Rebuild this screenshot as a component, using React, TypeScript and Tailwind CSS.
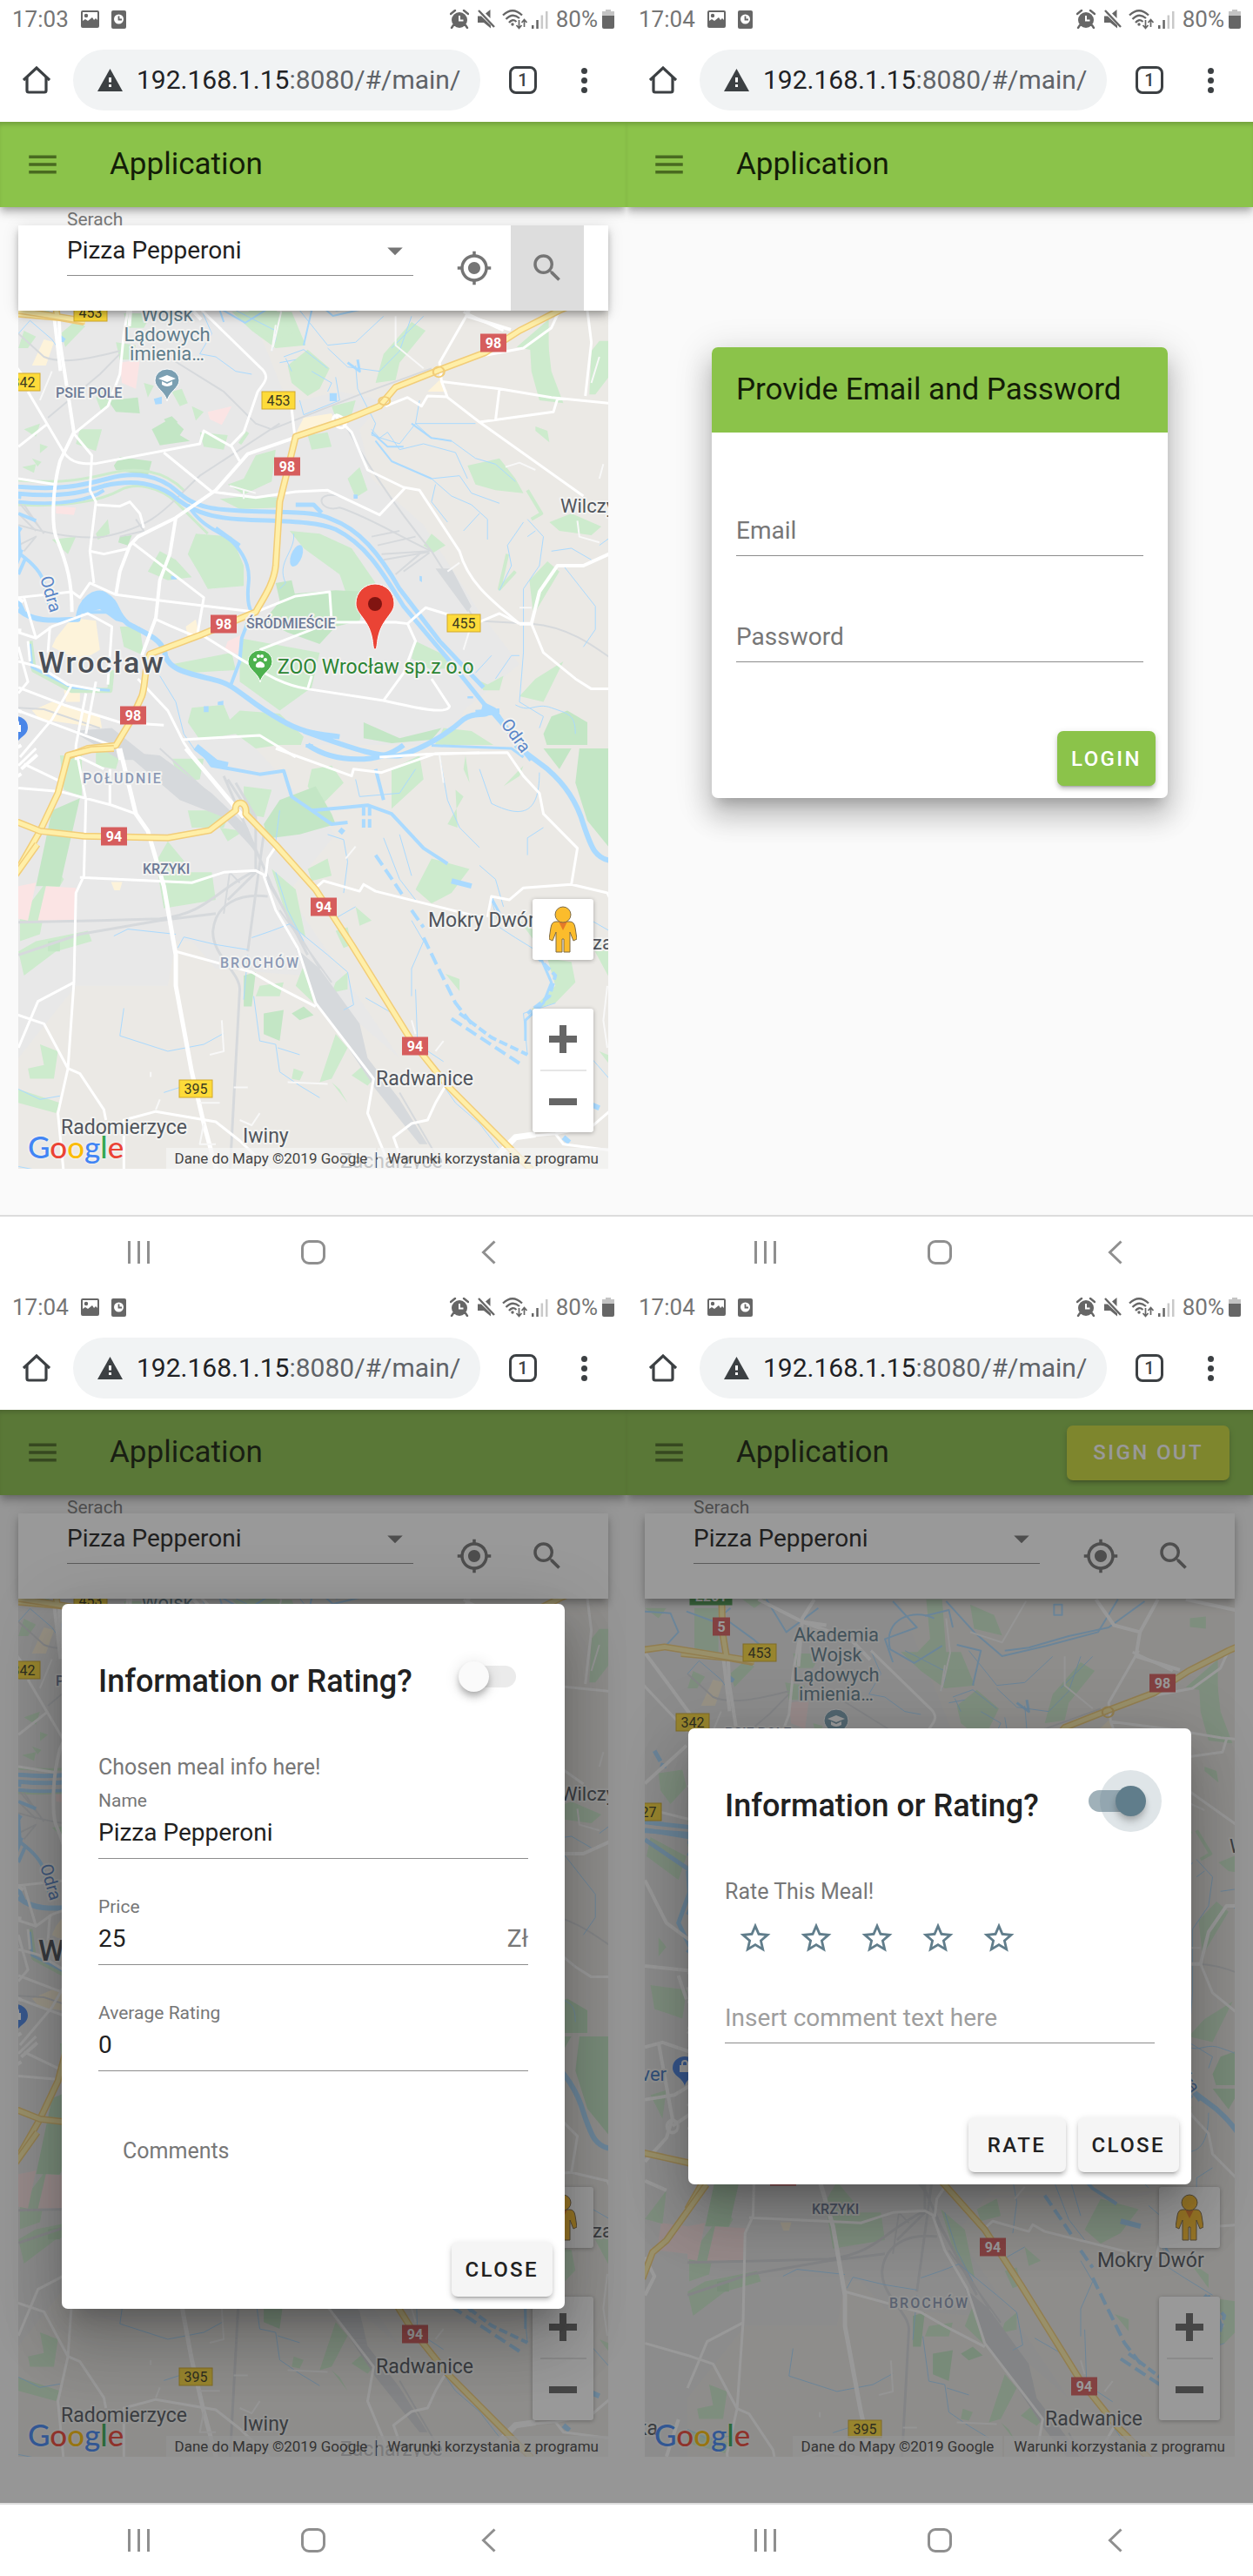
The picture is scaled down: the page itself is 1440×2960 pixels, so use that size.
import React from "react";
import { MdArrowDropDown, MdGpsFixed, MdMenu, MdSearch, MdStarBorder } from "react-icons/md";

/* ---------- Status bar ---------- */

function StatusBar({ time }: { time: string }) {
  return (
    <div className="flex h-11 items-center justify-between bg-white pl-[14px] pr-[14px] text-[26px] leading-none text-[#757575]">
      <div className="flex items-center gap-[14px]">
        <span>{time}</span>
        <svg className="h-[22px] w-[21px]" viewBox="0 0 21 22" fill="#666">
          <path
            fillRule="evenodd"
            d="M2 1h17a2 2 0 0 1 2 2v16a2 2 0 0 1-2 2H2a2 2 0 0 1-2-2V3a2 2 0 0 1 2-2Zm0 2v10l3-2 3 2 5-4 2 3 2-2 2 2V3Z"
          />
          <circle cx="6" cy="7" r="2.2" />
        </svg>
        <svg className="h-[22px] w-[17px]" viewBox="0 0 17 22" fill="none">
          <rect y="1" width="17" height="21" rx="2" fill="#666" />
          <circle cx="8.500" cy="11" r="5.500" fill="#fff" />
          <path d="M8.500 7.500V11.500H12" stroke="#666" strokeWidth="1.800" />
        </svg>
      </div>
      <div className="flex items-center">
        <svg className="mr-[10px] h-[22px] w-[22px]" viewBox="0 0 22 22" fill="none">
          <path d="M1 5 6 1M21 5 16 1M4 18 2 21M18 18l2 3" stroke="#666" strokeWidth="2.400" strokeLinecap="round" />
          <circle cx="11" cy="12" r="9" fill="#666" />
          <path d="M11 7v5.500h4.500" stroke="#fff" strokeWidth="2" />
        </svg>
        <svg className="mr-[8px] h-[22px] w-[20px]" viewBox="0 0 20 22" fill="#666">
          <path d="M0 7.500h4L15 18v3.500L7 15H0Z" />
          <path d="M9 4.500 14.500 0v10Z" />
          <path d="m1 1 18 19" stroke="#666" strokeWidth="2.400" />
        </svg>
        <svg className="mr-[5px] h-[24px] w-[29px]" viewBox="0 0 29 24" fill="none" stroke="#666" strokeWidth="2.300">
          <path d="M1 7.500Q12-3 23 7.500" />
          <path d="M4.500 12Q12 4 20 11" />
          <path d="M8 16Q12 11 16.500 15" />
          <circle cx="12" cy="18" r="1.700" fill="#666" stroke="none" />
          <path d="M19.500 13v9m-3-3 3 3.500 3-3.500M25.500 21v-8m-3 3 3-3.500 3 3.500" strokeWidth="1.700" />
        </svg>
        <svg className="mr-[9px] h-[22px] w-[19px]" viewBox="0 0 19 22">
          <path d="M0 18h2.500v4H0ZM5.300 12h2.500v10H5.300Z" fill="#666" />
          <path d="M10.600 6.500h2.500V22h-2.500ZM16 2h2.500v20H16Z" fill="#c9c9c9" />
        </svg>
        <span>80%</span>
        <svg className="ml-[5px] h-[22px] w-[14px]" viewBox="0 0 14 22">
          <path d="M4 0h6v2h4v5H0V2h4Z" fill="#c4c4c4" />
          <path d="M0 7h14v13a2 2 0 0 1-2 2H2a2 2 0 0 1-2-2Z" fill="#666" />
        </svg>
      </div>
    </div>
  );
}

/* ---------- Browser tool bar ---------- */

function BrowserBar() {
  return (
    <div className="flex h-24 items-center bg-white pl-[26px] pr-[41px]">
      <button type="button" aria-label="Home page" className="mr-[26px]">
        <svg className="block h-8 w-8" viewBox="0 0 32 32" fill="none" stroke="#3c4043" strokeWidth="3.200">
          <path d="M1 16 16 2 31 16" />
          <path d="M5 13v15a2 2 0 0 0 2 2h18a2 2 0 0 0 2-2V13" />
        </svg>
      </button>
      <div className="flex h-[70px] min-w-0 flex-1 items-center rounded-full bg-[#f1f3f4] pl-7 pr-[17px]">
        <svg className="mr-4 h-[26px] w-[29px] shrink-0" viewBox="0 0 29 26">
          <path d="M14.500 0 29 26H0Z" fill="#3c4043" />
          <path d="M13 10h3v5.500h-3ZM13 18h3v3h-3Z" fill="#fff" />
        </svg>
        <a href="#main" className="block min-w-0 flex-1 overflow-hidden whitespace-nowrap text-[30px] leading-[42px] text-[#5f6368]">
          <span className="text-[#202124]">192.168.1.15</span>:8080/#/main/
        </a>
      </div>
      <button
        type="button"
        aria-label="Open tabs"
        className="ml-[33px] flex h-8 w-8 items-center justify-center rounded-[8px] border-[3px] border-[#3c4043] text-[20px] font-medium leading-none text-[#3c4043]"
      >
        1
      </button>
      <button type="button" aria-label="More options" className="ml-[46px] flex w-4 flex-col items-center gap-1">
        <span className="h-[7px] w-[7px] rounded-full bg-[#3c4043]" />
        <span className="h-[7px] w-[7px] rounded-full bg-[#3c4043]" />
        <span className="h-[7px] w-[7px] rounded-full bg-[#3c4043]" />
      </button>
    </div>
  );
}

/* ---------- Application bar ---------- */

function AppBar({ signOut = false }: { signOut?: boolean }) {
  return (
    <header className="relative z-20 flex h-[98px] items-center bg-[#8bc34a] pl-7 pr-[27px] shadow-[inset_0_5px_5px_-2px_rgba(0,0,0,0.18),0_4px_7px_-2px_rgba(0,0,0,0.2),0_7px_9px_0_rgba(0,0,0,0.14),0_2px_18px_0_rgba(0,0,0,0.12)]">
      <button type="button" aria-label="Menu">
        <MdMenu className="block h-[42px] w-[42px] text-[#496a20]" />
      </button>
      <h1 className="ml-[56px] flex-1 text-[35px] leading-[42px] text-[#131d08]">Application</h1>
      {signOut && (
        <button
          type="button"
          className="h-[63px] rounded-[7px] bg-[#cddc39] px-[30px] text-[24px] font-medium tracking-widest text-white shadow-[0_5px_2px_-4px_rgba(0,0,0,0.2),0_4px_4px_0_rgba(0,0,0,0.14),0_2px_9px_0_rgba(0,0,0,0.12)]"
        >
          SIGN OUT
        </button>
      )}
    </header>
  );
}

function SearchCard({ id, active = false }: { id: string; active?: boolean }) {
  return (
    <form className="relative z-10 mx-[21px] mt-[21px] flex h-[98px] bg-white pl-[56px] pr-7 shadow-[0_4px_7px_-2px_rgba(0,0,0,0.2),0_7px_9px_0_rgba(0,0,0,0.14),0_2px_18px_0_rgba(0,0,0,0.12)]">
      <div className="relative mr-7 flex-1">
        <label htmlFor={id} className="absolute -top-[19px] left-0 text-[21px] leading-[24px] text-[#777]">
          Serach
        </label>
        <select
          id={id}
          className="h-[58px] w-full appearance-none border-b border-[#8c8c8c] bg-transparent text-[28px] text-[#212121] outline-none"
        >
          <option>Pizza Pepperoni</option>
        </select>
        <MdArrowDropDown className="pointer-events-none absolute right-0 top-2 h-[42px] w-[42px] text-[#757575]" />
      </div>
      <button type="button" aria-label="My location" className="flex w-[84px] items-center justify-center text-[#757575]">
        <MdGpsFixed className="h-[42px] w-[42px]" />
      </button>
      <button
        type="button"
        aria-label="Search"
        className={`flex w-[84px] items-center justify-center text-[#757575] ${active ? "bg-[#dddddd]" : ""}`}
      >
        <MdSearch className="h-[42px] w-[42px]" />
      </button>
    </form>
  );
}

/* ---------- Map ---------- */

type SheetProps = { transform: string; children: React.ReactNode };

const NORTH = "translate(0 350) scale(0.4592 0.3333)";
const SOUTH = "translate(0 860) scale(0.4592 0.3954)";
const NORTH_WEST = "translate(-49 -60) scale(0.4592 0.3954)";
const SOUTH_WEST = "translate(-49 560) scale(0.4592 0.5485)";

function Sheet({ transform, children }: SheetProps) {
  return <g transform={transform}>{children}</g>;
}

function Line({ d, color, width, dash }: { d: string; color: string; width: number; dash?: string }) {
  return (
    <path
      d={d}
      fill="none"
      stroke={color}
      strokeWidth={width}
      strokeDasharray={dash}
      strokeLinejoin="round"
      vectorEffect="non-scaling-stroke"
    />
  );
}

const GREEN = "#cdebcd";
const DARK_GREEN = "#c3e6c5";
const WATER = "#aadaff";
const RAIL = "#d6d9dc";
const PINK = "#fbe4e4";
const CREAM = "#fdf3da";

const MAIN_NORTH =
  "M1500 -40L1400 20L1300 90L1215 165L1100 225L990 285L950 350L870 395L740 455L725 540L700 680L690 900C685 970 650 1030 640 1060L500 1140L375 1205C360 1260 365 1310 355 1350L325 1440L290 1520L220 1530L165 1560";
const MAIN_SOUTH = "M285 0L230 3L170 20L145 130L100 240L46 350";
const MAIN_94 =
  "M-70 185L46 215L100 240L210 255L420 260L525 238L590 180C585 150 620 150 615 190L690 280L790 410L880 570L1030 850L1120 980L1330 1225";
const MAIN_NW = "M40 1052L95 1043L240 1070L320 1085M238 890L240 1000L250 1070";
const MAIN_SW = "M200 748L100 865L65 890L40 945";

function Highway({ d }: { d: string }) {
  return (
    <>
      <Line d={d} color="#f2cd78" width={8} />
      <Line d={d} color="#ffefa8" width={5} />
    </>
  );
}

function Terrain() {
  return (
    <>
      <rect x="-40" y="280" width="760" height="1080" fill="#e8e8e8" />
      <Sheet transform={NORTH}>
        <path
          fill="#ebe9e5"
          d="M560 -200H1600V1590H1120L1160 1400L1300 1240L1200 1060L1060 760L930 600L900 430L960 330L850 300L720 340L680 200Z"
        />
        <path
          fill={GREEN}
          d="M580 25H730L765 140L690 150L630 90ZM720 210L770 155L825 220L800 290L770 315L730 270ZM960 170L1030 60L1065 90L1000 200L990 260L940 270ZM1325 110H1370L1380 230L1410 340L1350 330L1330 230ZM1475 310L1480 160L1500 125H1540V220L1490 310ZM610 600L640 520L690 500L680 610L610 655L570 620ZM550 670L620 660L700 665V700L600 705ZM470 860L490 790L580 800L610 900V970L520 980L500 930ZM725 780L800 790L880 840L940 960L870 1010L850 930L760 840ZM600 1150L720 1180L800 1200L780 1320L700 1400L600 1300ZM190 480L200 430L255 430L240 505ZM770 450L820 440L830 490L780 500ZM130 810L190 800L170 860ZM1325 950L1370 885L1400 920L1335 1070ZM1340 1290L1410 1230L1360 1370L1300 1350ZM1170 555L1250 530L1290 600L1310 650L1240 640L1190 620ZM1060 830L1080 790L1115 830L1085 855ZM870 600L900 560L920 640L890 665ZM1375 750L1430 720L1505 765L1480 795L1400 780ZM480 1390L560 1380L590 1480L500 1500L470 1440ZM600 1400L700 1410L760 1490L740 1570L640 1530L560 1450ZM400 850L440 880L480 940L420 950L370 920ZM1040 1160L1100 1200L1140 1250L1080 1260L1030 1220ZM430 300L455 290L470 340L450 350ZM480 350L510 370L490 400ZM500 440L570 450L560 500L510 490ZM360 270L385 280L370 320ZM60 430l40-20l-10 45ZM55 560l35-10l-5 30ZM100 480l20 10l-20 22ZM80 530l24 12l-10 16ZM60 90L90 110L70 150L46 150ZM830 350L890 330L880 380L840 390ZM240 320l20-30l14 50l-20 30ZM290 130l50 10l-10 50h-30ZM310 30h70l-20 50h-40ZM240 790L270 740L275 790L245 810ZM1340 420l30 15l5 40l-35-40ZM1190 1290l30 20l40-30l-10 50h-40ZM1110 1460L1180 1470L1260 1540L1200 1560L1080 1540ZM430 1240L580 1200L590 1260L470 1270ZM300 1110L350 1110L360 1210L310 1180Z"
        />
        <path
          fill={DARK_GREEN}
          d="M690 1040L710 1000L840 985L920 990L900 1090L840 1110L800 1170L720 1130L660 1090ZM1380 1420L1420 1400L1470 1440V1570H1380L1360 1480ZM910 1440L1000 1495L1105 1460L1080 1500L980 1512L910 1495ZM270 330L345 320L350 375L290 370ZM380 430L430 390L460 430L450 450L475 470L400 485ZM285 555L300 525L380 540L370 590L290 570ZM410 395L430 385L445 405L425 420ZM690 960L730 950L740 1010L700 1020ZM300 800L330 795L320 830L296 820Z"
        />
        <path
          fill={PINK}
          d="M300 200L350 190L345 240L340 290L305 270ZM520 370L580 350L555 415L525 395ZM140 695L190 700L185 725L140 720ZM570 1160L602 1140L595 1205L562 1190Z"
        />
        <path
          fill={CREAM}
          d="M80 210L110 120L135 130L115 210ZM760 390L830 375L840 410L740 445ZM1070 300L1100 260L1120 300ZM140 1150L180 1080L240 1090L250 1190L200 1230L130 1180ZM80 1400L130 1370L250 1420L255 1460L100 1430ZM160 1330L200 1325L200 1370L165 1370ZM465 1110L490 1085L500 1150L470 1150Z"
        />
        <Line color={GREEN} width={6} d="M75 1160L85 1260L180 1330L275 1330L280 1260" />
        <Line color={GREEN} width={3} d="M46 605C160 620 220 600 280 580S410 570 460 640M46 690C180 700 260 670 300 640S400 630 440 680L520 790" />
        <Line color={GREEN} width={4} d="M1320 640L1355 720L1330 740M620 440L600 480M1270 860L1250 980L1290 920" />
      </Sheet>
      <Sheet transform={SOUTH}>
        <path fill="#ebe9e5" d="M700 -10H1600V1260H46V900L190 690H420L440 560L480 560L540 640L760 660L1000 900L720 420L840 250L640 0Z" />
        <path
          fill={GREEN}
          d="M470 180L530 180L570 200L560 230L480 230ZM150 20H205V140L160 120ZM50 490L140 350L160 380L110 480L100 540L50 560ZM390 330L420 270L470 340L460 360H530L540 440L410 465ZM1040 410L1080 320L1175 350L1130 420L1080 450ZM1480 570H1540V700ZM780 60L830 50L860 100L800 170L770 110ZM980 60L1050 20L1060 90L980 175ZM680 350L740 410L765 550L720 500ZM770 350L820 320L830 370L780 385ZM890 460L930 500L900 515ZM840 530L870 520L880 570L860 580ZM650 690L710 680L700 720L640 720ZM820 900L840 830L870 870L830 960L800 970ZM730 960L735 930L760 940L750 965ZM830 970L850 990L870 1030ZM880 950L910 920L935 960L920 980ZM70 930L110 920L100 860L145 880L135 960L75 960ZM46 990L150 1030L140 1060L46 1030ZM1370 610L1430 620L1440 680L1390 740L1330 760L1390 690ZM1115 655L1150 670L1150 705ZM46 590L90 560L220 530L230 560L140 590L60 660ZM240 0L300 20L290 60L240 50ZM430 30L510 30L500 90L450 100ZM1140 120L1160 140L1120 220L1145 230ZM760 630L785 740L740 690ZM1500 880L1540 900V940ZM840 680L870 650V700L830 710ZM550 230L610 240L570 270ZM610 110L680 120L660 200L610 190ZM1260 110L1310 50L1300 80ZM1165 20L1175 100L1160 60ZM1300 500L1350 540L1350 580Z"
        />
        <path
          fill={DARK_GREEN}
          d="M660 220L700 150L790 110L830 190L840 220L750 250L670 262ZM130 180L200 145L150 400H90ZM1450 0H1540V310L1470 210L1440 100ZM1360 0H1430L1400 60ZM610 660L640 650L630 750H610ZM660 770L710 760L700 850L660 830ZM730 770L760 750L785 775L750 790ZM120 560L150 555V590L120 590Z"
        />
        <path fill={PINK} d="M46 400L90 390L70 500L46 495ZM115 400L190 405L185 500L95 500ZM-20 390L46 400V480L-30 470Z" />
        <path fill={CREAM} d="M278 388h28l-6 24h-14Z" />
        <path fill={RAIL} d="M310 10L400 20L530 130L620 230L640 300L560 200L450 150ZM740 580L800 640L900 800L920 900L1000 1020L1070 1150L1050 1150L940 990L860 850L790 740Z" />
      </Sheet>
      <Sheet transform={NORTH_WEST}>
        <path
          fill={GREEN}
          d="M46 930H100L80 960ZM170 930H230V1060H170ZM860 920L920 950L940 1010L870 990ZM750 905H790L800 1060L840 1120L790 1140L710 1080L760 1020ZM1410 960L1450 955V990L1410 985ZM80 1410L140 1400L150 1450L110 1500L85 1460ZM290 905H350L320 930ZM260 1120L300 1080L320 1100L270 1160ZM1430 1130L1480 1080V1180L1400 1160Z"
        />
      </Sheet>
      <Sheet transform={SOUTH_WEST}>
        <path
          fill={GREEN}
          d="M60 20L150 60L130 110L50 60ZM80 230L100 250L80 270ZM60 330L150 340L140 400L70 380ZM60 560L100 550L90 610ZM46 820L100 760L90 830Z"
        />
      </Sheet>
    </>
  );
}

function Rails() {
  return (
    <>
      <Sheet transform={NORTH}>
        <Line
          color={RAIL}
          width={2}
          d="M46 100L110 180C160 210 240 180 300 160M120 390L250 240L300 170M420 180L560 300L640 410L680 430L900 310L1080 220M46 760C120 790 200 810 260 800C400 760 420 690 500 590L700 410M870 430C900 500 960 650 1080 850L1190 1090L1330 1100C1420 1110 1480 1170 1540 1230M850 660C780 640 800 720 850 700C920 730 1000 800 1080 850M46 680L100 770M60 690L110 790M46 720L90 780M340 740L360 780L300 800"
        />
        <Line
          color={RAIL}
          width={2}
          d="M930 800L1000 780M945 830L1040 800M955 860L1075 850M960 880L1075 852M1010 920L1075 855M990 930L1050 860M46 830L90 800L60 850M46 1390L110 1395L250 1460"
        />
        <path fill={RAIL} d="M1090 910L1130 910L1180 1040L1170 1060ZM180 1470L280 1460L380 1570H300Z" />
      </Sheet>
      <Sheet transform={SOUTH}>
        <Line
          color={RAIL}
          width={3}
          d="M46 505L250 500L400 495C520 480 540 410 640 355M46 600L200 540L400 500L540 480M575 1240L600 700C600 650 530 600 533 530C540 450 600 420 670 430M620 590L660 250L570 90M590 100L640 200L640 360L570 440M560 80L620 240L680 400L770 600"
        />
        <Line color={RAIL} width={2} d="M400 0L560 170L640 300M660 370L800 640M700 470L830 680M560 480L575 360L600 390M1000 1000L1090 1180" />
      </Sheet>
    </>
  );
}

function Water() {
  return (
    <>
      <Sheet transform={NORTH}>
        <Line
          color={WATER}
          width={5}
          d="M-70 610L46 628C150 640 200 625 270 600C340 572 400 592 440 640C490 700 520 712 690 715C770 716 800 722 830 740C900 775 950 860 1000 980L1100 1160L1210 1320"
        />
        <Line
          color={WATER}
          width={5}
          d="M-70 640L46 652C150 665 200 650 260 625C340 600 390 620 430 655C470 705 520 735 600 740C700 748 790 745 840 775C920 830 960 930 1010 1040L1120 1220L1225 1400"
        />
        <Line color={WATER} width={4} d="M46 680C160 695 230 670 260 640M470 690C510 780 560 780 590 830S625 920 622 960S620 1040 630 1060L605 1150L600 1230L578 1310" />
        <Line
          color={WATER}
          width={6}
          d="M46 1050C80 1095 130 1090 195 1085C200 1015 240 980 262 1000C300 1030 285 1060 320 1100C360 1130 400 1150 412 1195C415 1260 470 1270 540 1295C590 1310 620 1370 700 1430C760 1480 800 1480 850 1490M760 1470C900 1540 950 1560 1000 1555C1060 1530 1120 1480 1160 1430C1190 1400 1210 1425 1230 1400L1280 1480L1330 1570"
        />
        <Line color={WATER} width={4} d="M46 780L50 860C90 900 105 930 110 960L125 1050M46 930L65 870M205 1060H270M46 720L90 745M540 770L600 830" />
        <Line color={WATER} width={5} d="M740 690H785L805 718M500 1540L530 1570M1190 1405L1250 1400" />
        <path fill={WATER} d="M205 1020L235 990L265 1000L290 1050L320 1100L290 1090L250 1050L205 1065ZM1210 1370L1240 1390L1275 1460L1235 1415L1200 1420Z" />
        <ellipse cx="742" cy="866" rx="14" ry="38" fill={WATER} transform="rotate(14 742 866)" />
        <path
          fill={WATER}
          d="M825 305h18v28h-18ZM385 325l20-8v25l-16 2ZM510 1385h12v20h-12ZM545 1370l14-5v16h-14ZM428 935h14v12h-14ZM765 1515h18v12h-18ZM1050 935l6 2v20l-6-5ZM1170 1350h14v8h-14ZM148 115h12v14h-12ZM885 655h10v14h-10Z"
        />
        <Line
          color={WATER}
          width={1}
          d="M46 100L75 55L130 120L150 160M505 20L530 100L500 170L540 180L590 230L630 240M590 20L690 90V120L680 160M710 180L760 155L820 220M715 185L730 230M700 200L740 190M750 20L820 140L890 130L960 40M820 150L870 215L950 230L1000 160L1030 40M1060 40L980 150M890 210L895 290L940 410L930 450L1000 480L1040 410L1190 410M1050 330L1040 410L1080 460L1130 470L1190 530L1240 550L1290 610M940 470L980 540L1080 600L1130 660L1180 690L1220 740V810M930 430L950 460L970 440L1000 500L1060 480L1140 510L1170 600M1080 600L1150 590L1180 650L1250 685M1090 620L1080 680L1120 750M1200 720L1160 780M1340 780L1320 800M1310 750L1270 830L1280 900L1250 985M1320 740L1360 800L1350 900L1310 980V1200L1300 1370M1410 900L1450 970L1490 1040V1120L1460 1180M1380 850L1430 840L1480 880M735 790C740 850 690 890 715 960L700 980M400 1280L440 1370L460 1480L490 1540M1290 1380C1330 1410 1340 1370 1380 1390S1440 1410 1440 1480M1240 1290L1280 1210H1300M1300 1370L1360 1420L1350 1460M840 250L850 330L760 380M750 330L760 380M780 230L830 270L820 300M1540 790L1500 830M1190 1270L1230 1210"
        />
        <Line color={WATER} width={3} d="M1080 1520L1280 1530L1310 1560M75 1170L80 1250L180 1320L275 1330M870 200L900 230L895 190" />
        <Line color={WATER} width={2} d="M930 440L970 490L1010 490M940 470L980 540L1080 600M1030 410L1080 460L1130 470" />
        <Line color={WATER} width={2} d="M140 -90L210 -20L260 40M560 -150L620 -60L540 -20L560 60M640 -100L700 -120L710 -60M720 0L780 20L760 140M840 20L900 10L1000 -30L1100 -60L1190 -150" />
      </Sheet>
      <Sheet transform={SOUTH}>
        <Line color={WATER} width={6} d="M770 -10C840 45 950 45 1010 -10M1290 -10L1370 60C1430 120 1450 180 1460 220C1480 290 1490 325 1540 328" />
        <Line color={WATER} width={4} d="M500 0L530 50L580 60L650 75L710 65L730 140L780 180L860 172L920 165L980 190L1020 240L1060 290L1120 335M940 60L960 150M780 180L830 220L870 215" />
        <Line color={WATER} width={8} d="M490 -5L540 42L570 50" />
        <Line color={WATER} width={4} dash="14 6" d="M1060 550L1140 740L1180 800M1030 470L1060 520M940 310L1010 430M1130 785L1300 915" />
        <Line color={WATER} width={4} dash="10 4" d="M910 170V230M925 170V230M1150 770L1230 840L1320 890M1340 600L1390 660L1375 720L1320 770" />
        <Line color={WATER} width={6} d="M1130 385L1180 400M1410 1130L1425 1145M1480 1035L1500 1045M850 235L860 245" />
        <Line
          color={WATER}
          width={1}
          d="M285 545L320 525L440 540M445 580L460 548L540 570L620 585M620 600L610 730M635 720L650 850L690 860L700 940L750 980L800 1015M310 755L300 835L420 880L510 860L560 828M915 725L990 775M1100 20L1120 150L1150 230L1200 288M1350 70C1350 200 1300 200 1230 160L1200 60M820 250L860 265L870 330L860 420M630 550L680 530L725 510L820 600L870 650L885 745L860 760M845 490L890 460M1030 720L1030 640L1060 560L1030 500M1040 700L1045 860L1110 910M960 260L1000 380L1040 440M1000 250L1030 370M1230 440L1250 520L1290 550L1360 600M1390 740L1310 770L1320 890M1360 230L1320 260V310M1200 340L1240 380L1260 460M1110 980L1140 1030L1200 1090L1260 1180M695 870L750 890M46 990L100 1020L150 1010M410 1000L450 985M46 1215L90 1225M690 360L720 470L760 560M700 180L690 270M890 90L900 140L1000 130L1040 60M1480 500L1540 540M1480 900L1540 980"
        />
        <Line color={WATER} width={3} d="M1350 600L1380 680L1360 740L1315 790V850M1230 435L1260 500" />
      </Sheet>
      <Sheet transform={NORTH_WEST}>
        <Line
          color={WATER}
          width={2}
          d="M46 940L110 945L130 1000L90 1050M150 940L220 970L260 930M350 905L400 1000L480 930M660 1050C640 960 720 930 770 960M660 1050L720 1090L790 1040M800 910L870 1000L940 1070L1050 1040L1180 1000L1230 905M1070 920h20v30h-20Z"
        />
        <Line color={WATER} width={5} d="M70 1345L85 1375M85 1385L100 1390M255 1130L268 1142" />
      </Sheet>
      <Sheet transform={SOUTH_WEST}>
        <Line color={WATER} width={5} d="M46 5L160 20M46 25L160 90M160 130L130 200L165 260" />
      </Sheet>
    </>
  );
}

function Roads() {
  return (
    <>
      <Sheet transform={NORTH}>
        <Line
          color="#fff"
          width={4}
          d="M148 50L150 130L185 440L150 540C130 640 130 760 140 800C170 900 180 960 180 1060M735 460L620 515L540 640L440 735L345 800L325 830L300 920L290 1000M440 735L425 860L400 950L390 1080L355 1210M1300 1100L1330 1100L1350 990L1395 900L1460 900L1540 850"
        />
        <Line
          color="#fff"
          width={3}
          d="M325 -20L310 100L300 240L270 350L185 445M46 490L120 410M70 300L160 510C180 550 210 550 240 548L500 480L510 435L580 490L600 540M505 20L650 215C680 250 660 270 645 300L610 440L575 490M730 360L738 455M185 445L230 520L225 640L240 680L225 850L235 960M410 510L530 645L640 665L740 645L820 640L950 725L1015 630M840 385L880 440L920 570L1010 630L1050 640L1150 850C1170 950 1220 1010 1300 1100M1175 20L1100 200L1105 265L1250 290L1380 320L1540 342M1200 405L1385 370L1395 325M1105 265L1120 320L1200 405L1460 660M1250 290L1240 400M1160 25L1260 90M1470 20L1480 130L1465 315M1215 175L1310 150L1380 80L1400 20M965 350L1020 320L1055 350L1070 315L1120 318M840 380C820 400 850 440 862 420S850 380 840 380"
        />
        <Line
          color="#fff"
          width={3}
          d="M240 690L300 695L325 680L350 720L360 770M225 850L260 860L325 840M330 820L510 1010L495 1130L600 1220C650 1260 700 1310 770 1325L960 1365C1040 1390 1120 1415 1125 1385L1080 1290M46 1010L180 990L200 1010L225 960L290 1000L400 1020L640 1060L740 1005L825 990L830 1095L990 1095L1020 1100L1065 1045L1150 1080L1190 1100L1250 1065L1300 1100M650 1190L800 1110M770 1325L780 1280M1020 1100L1040 1160L1010 1270L960 1365M1330 1100L1360 1200L1440 1290L1480 1325H1540M345 1290L420 1400L460 1510L490 1570M455 1500L650 1485L740 1560M390 1085L430 1110L500 1150M950 1560L1070 1550L1200 1545M-70 560L46 600L140 620M-70 130L46 300"
        />
        <Line
          color="#fff"
          width={3}
          d="M46 1130L90 1150L130 1110L220 1065L280 1110L270 1310M70 1160L75 1230M46 1320L160 1380L300 1440L410 1450M46 1230L100 1250L170 1310L250 1330M180 1310L130 1430L50 1560M46 1400L280 1520M215 1340L190 1520V1570M240 1300L215 1480M46 1180L70 1300L46 1340M125 1110L120 1200M60 1010L90 1150M290 1510L300 1570"
        />
        <Line color="#f8f8f8" width={2} d="M575 625L640 650M610 640V670M990 40V140L1060 220M1265 560L1300 545L1340 570M1510 550L1500 600M1300 1045H1330M1150 890L1120 920M1180 1100L1160 1190M1445 745L1450 800L1500 820M1500 180L1480 270M130 230L100 330M690 70L680 160" />
      </Sheet>
      <Sheet transform={SOUTH}>
        <Line color="#fff" width={5} d="M300 0L340 190L370 240L410 400L440 600V690L480 940L510 1090L545 1240M465 0L610 200" />
        <Line
          color="#fff"
          width={3}
          d="M190 0L215 150L210 370L190 420L185 680L170 930L145 1060L160 1240M46 115L150 125L280 165L340 190M275 60V160M46 50L90 0M60 45L150 95M180 15L260 60M200 375L480 390L560 360L640 355L665 370L670 320L690 285M660 370L690 470L745 580L790 740L935 960L920 1060L985 1240M440 590L630 650L690 690L790 750M690 0L880 80L885 60L955 70L1090 15L1270 12L1310 80L1350 130L1360 190L1445 290L1430 395L1310 405L1275 440L1230 430L1220 490M790 405L810 385L900 415L910 395L940 415L1200 490M1430 395L1520 420L1540 470M46 870L95 735L185 680M46 775L110 800L170 930L200 945L260 1050L265 1080M310 1240V1080L390 1055L540 1085L600 1140L690 1240M1115 980L1090 1030L1070 1080L1030 1090L985 1130L1000 1180M1540 1040L1480 1100L1390 1120L1290 1130M1390 1120L1410 1150L1540 1170M-60 740L46 775"
        />
        <Line color="#fff" width={7} d="M1240 1190L1290 1130L1340 1122" />
        <Line color="#f8f8f8" width={2} d="M555 790L560 880L525 890M500 1030H550M600 1080L630 1095L650 1060M585 985H620M1030 790L1040 830M1090 880L1110 850M720 970L820 975M1100 20L1110 100M865 320L890 285M1520 690L1510 790L1520 870M510 1090L500 1150H540M400 1020L390 1050M377 940V955" />
      </Sheet>
      <Sheet transform={NORTH_WEST}>
        <Line color="#fff" width={4} d="M470 905L440 960L430 1100M440 970L560 1020L610 1080M46 1060L110 1160L160 1240M242 1070L258 1230M330 905L440 970L500 980M1175 905L1220 980L1285 1000L1330 905M1285 1000L1275 1070L1385 1110M1400 905L1540 940M46 1440L150 1330" />
        <Line color="#f8f8f8" width={2} d="M800 960L810 1060L790 1160M860 1000L940 1030L1000 910" />
      </Sheet>
      <Sheet transform={SOUTH_WEST}>
        <Line
          color="#fff"
          width={4}
          d="M46 110L100 200L165 240M46 290L160 300M130 310L150 360M46 460L90 450L160 470M80 450L115 610L100 650L46 700M46 570L120 560L160 540M115 625L160 600M46 740L100 760M160 590L200 560M46 900L70 940L46 980M130 1240L100 1318"
        />
        <ellipse cx="115" cy="626" rx="14" ry="13" fill="none" stroke="#fff" strokeWidth={7} />
      </Sheet>
      <Sheet transform={NORTH}>
        <Highway d="M30 30L150 45L210 60" />
        <Highway d={MAIN_NORTH} />
        <ellipse cx="1098" cy="232" rx="14" ry="18" fill="none" stroke="#f2cd78" strokeWidth={5} />
        <ellipse cx="962" cy="332" rx="14" ry="14" fill="none" stroke="#f2cd78" strokeWidth={5} />
      </Sheet>
      <Sheet transform={SOUTH}>
        <Highway d={MAIN_SOUTH} />
        <Highway d={MAIN_94} />
      </Sheet>
      <Sheet transform={NORTH_WEST}>
        <Highway d={MAIN_NW} />
      </Sheet>
      <Sheet transform={SOUTH_WEST}>
        <Highway d={MAIN_SW} />
      </Sheet>
    </>
  );
}

type Kind = "yellow" | "red" | "green";

const SHIELDS: { x: number; y: number; text: string; kind: Kind }[] = [
  { x: 104, y: 359, text: "453", kind: "yellow" },
  { x: 27, y: 439, text: "342", kind: "yellow" },
  { x: 320, y: 460, text: "453", kind: "yellow" },
  { x: 533, y: 716, text: "455", kind: "yellow" },
  { x: 225, y: 1251, text: "395", kind: "yellow" },
  { x: -28, y: 542, text: "327", kind: "yellow" },
  { x: 567, y: 394, text: "98", kind: "red" },
  { x: 330, y: 536, text: "98", kind: "red" },
  { x: 257, y: 717, text: "98", kind: "red" },
  { x: 153, y: 822, text: "98", kind: "red" },
  { x: 131, y: 961, text: "94", kind: "red" },
  { x: 372, y: 1042, text: "94", kind: "red" },
  { x: 477, y: 1202, text: "94", kind: "red" },
  { x: 60, y: 329, text: "5", kind: "red" },
  { x: 48, y: 294, text: "E261", kind: "green" },
];

function Shields() {
  return (
    <>
      {SHIELDS.map((s) => {
        const w = s.kind === "yellow" ? 38 : s.kind === "green" ? 48 : s.text.length > 1 ? 29 : 19;
        const fill = s.kind === "yellow" ? "#fddb3a" : s.kind === "green" ? "#4b9c50" : "#d65d5d";
        const edge = s.kind === "yellow" ? "#d2a92a" : fill;
        return (
          <g key={`${s.text}-${s.x}-${s.y}`}>
            <rect x={s.x - w / 2} y={s.y - 10} width={w} height={20} fill={fill} stroke={edge} />
            <text
              x={s.x}
              y={s.y + 6}
              textAnchor="middle"
              fontSize={16}
              fontWeight={s.kind === "yellow" ? 400 : 700}
              fill={s.kind === "yellow" ? "#3b3a20" : "#fff"}
            >
              {s.text}
            </text>
          </g>
        );
      })}
    </>
  );
}

type PlaceProps = {
  x: number;
  y: number;
  size: number;
  color: string;
  children: string;
  weight?: number;
  anchor?: "start" | "middle" | "end";
  tracking?: number;
  rotate?: number;
};

function Place({ x, y, size, color, children, weight = 400, anchor = "start", tracking, rotate }: PlaceProps) {
  return (
    <text
      x={x}
      y={y}
      fontSize={size}
      fontWeight={weight}
      fill={color}
      textAnchor={anchor}
      letterSpacing={tracking}
      transform={rotate ? `rotate(${rotate} ${x} ${y})` : undefined}
      stroke="#f3f3f1"
      strokeWidth={4}
      strokeLinejoin="round"
      paintOrder="stroke"
    >
      {children}
    </text>
  );
}

function Places() {
  const town = "#50555c";
  const district = "#6c7a96";
  const suburb = "#8b99b5";
  return (
    <>
      <Place x={192} y={346} size={22} color="#5f7d8c" anchor="middle">Akademia</Place>
      <Place x={192} y={369} size={22} color="#5f7d8c" anchor="middle">Wojsk</Place>
      <Place x={192} y={392} size={22} color="#5f7d8c" anchor="middle">Lądowych</Place>
      <Place x={192} y={414} size={22} color="#5f7d8c" anchor="middle">imienia…</Place>
      <Place x={64} y={457} size={16} weight={500} color={district}>PSIE POLE</Place>
      <Place x={644} y={589} size={22} color={town}>Wilczyce</Place>
      <Place x={44} y={773} size={34} weight={500} tracking={2} color="#4a4f57">Wrocław</Place>
      <Place x={283} y={722} size={16} weight={500} color={district}>ŚRÓDMIEŚCIE</Place>
      <Place x={319} y={774} size={23} color="#2c8534">ZOO Wrocław sp.z o.o</Place>
      <Place x={95} y={900} size={16} weight={500} tracking={2} color={suburb}>POŁUDNIE</Place>
      <Place x={164} y={1004} size={16} weight={500} color={district}>KRZYKI</Place>
      <Place x={253} y={1112} size={16} weight={500} tracking={2} color={suburb}>BROCHÓW</Place>
      <Place x={492} y={1065} size={23} color={town}>Mokry Dwór</Place>
      <Place x={681} y={1091} size={22} color={town}>za</Place>
      <Place x={432} y={1247} size={23} color={town}>Radwanice</Place>
      <Place x={70} y={1303} size={23} color={town}>Radomierzyce</Place>
      <Place x={279} y={1313} size={23} color={town}>Iwiny</Place>
      <Place x={391} y={1342} size={23} color={town}>Zacharzyce</Place>
      <Place x={-13} y={1258} size={23} color={town} anchor="end">ka</Place>
      <Place x={-3} y={851} size={22} color="#3f78c4" anchor="end">ver</Place>
      <Place x={46} y={664} size={20} color="#5a86c8" rotate={74}>Odra</Place>
      <Place x={575} y={832} size={20} color="#5a86c8" rotate={54}>Odra</Place>
    </>
  );
}

function Pins() {
  return (
    <>
      <g>
        <path d="M192 461C190 450 178 446 178 437a14 13 0 0 1 28 0C206 446 194 450 192 461Z" fill="#7b9fb2" stroke="#fff" />
        <path d="m182 435 10-4 10 4-10 4ZM186 438v4q6 4 12 0v-4l-6 3Z" fill="#fff" />
      </g>
      <g>
        <path d="M299 784C297 773 285 770 285 760a14 13 0 0 1 28 0C313 770 301 773 299 784Z" fill="#4db24f" stroke="#fff" />
        <path d="M294 766q-1-4 5-6 6 2 5 6-2 2-5 1-3 1-5-1Z" fill="#fff" />
        <g fill="#fff">
          <circle cx="293" cy="758" r="2" />
          <circle cx="297" cy="754" r="2" />
          <circle cx="301" cy="754" r="2" />
          <circle cx="305" cy="758" r="2" />
        </g>
      </g>
      <g>
        <path d="M18 857C16 847 4 846 4 836a14 13 0 0 1 28 0C32 846 20 847 18 857Z" fill="#4a86e8" />
        <path d="M12 833h12v8H12Z" fill="#fff" />
        <path d="M15 833v-2a3 3 0 0 1 6 0v2" stroke="#fff" strokeWidth="2" fill="none" />
      </g>
    </>
  );
}

const GOOGLE_LETTERS = [
  ["G", "text-[#4285f4]"],
  ["o", "text-[#ea4335]"],
  ["o", "text-[#fbbc05]"],
  ["g", "text-[#4285f4]"],
  ["l", "text-[#34a853]"],
  ["e", "text-[#ea4335]"],
];

function MapView({ viewBox, marker = false }: { viewBox: string; marker?: boolean }) {
  return (
    <div className="relative mx-[21px] h-[986px] overflow-hidden">
      <svg className="block h-full w-full" viewBox={viewBox} preserveAspectRatio="xMidYMid slice" fontFamily="Roboto, sans-serif">
        <Terrain />
        <Rails />
        <Water />
        <Roads />
        <Places />
        <Shields />
        <Pins />
        {marker && (
          <g>
            <path
              d="M431 746C429 746 429 742 428 735C426 724 423 718 417 710C412 703 409 700 409 693a22 22 0 0 1 44 0C453 700 450 703 445 710C439 718 436 724 434 735C433 742 433 746 431 746Z"
              fill="#ea4335"
              stroke="#fff"
              strokeWidth="1"
            />
            <circle cx="431" cy="694" r="8" fill="#811411" />
          </g>
        )}
      </svg>
      <div className="absolute bottom-[42px] right-[17px] flex flex-col gap-14">
        <button
          type="button"
          aria-label="Street View"
          className="flex h-[70px] w-[70px] items-center justify-center rounded-[3px] bg-white shadow-[0_1px_5px_rgba(0,0,0,0.3)]"
        >
          <svg className="h-[54px] w-[32px]" viewBox="0 0 32 54" fill="#fbbc2c" stroke="#7d6a45" strokeWidth="1">
            <path d="M8 18Q3 18 2 25L0 38l4 2 4-10v23h7V38h2v15h7V30l4 10 4-2-2-13Q29 18 24 18Z" />
            <path d="M11 18h10l-5 10Z" fill="#e57a28" stroke="none" />
            <circle cx="16" cy="10" r="9" />
          </svg>
        </button>
        <div className="flex h-[142px] w-[70px] flex-col items-center rounded-[3px] bg-white shadow-[0_1px_5px_rgba(0,0,0,0.3)]">
          <button type="button" aria-label="Zoom in" className="flex w-full flex-1 items-center justify-center">
            <svg className="h-8 w-8" viewBox="0 0 32 32" fill="#666">
              <path d="M12 0h8v12h12v8H20v12h-8V20H0v-8h12Z" />
            </svg>
          </button>
          <div className="h-[2px] w-[53px] bg-[#e6e6e6]" />
          <button type="button" aria-label="Zoom out" className="flex w-full flex-1 items-center justify-center">
            <svg className="h-8 w-8" viewBox="0 0 32 32" fill="#666">
              <path d="M0 12h32v8H0Z" />
            </svg>
          </button>
        </div>
      </div>
      <a
        href="#google"
        className="absolute bottom-[6px] left-[11px] font-[Lato] text-[35px] font-medium leading-[40px] [text-shadow:0_0_3px_#fff]"
      >
        {GOOGLE_LETTERS.map(([letter, color], i) => (
          <span key={i} className={color}>
            {letter}
          </span>
        ))}
      </a>
      <div className="absolute bottom-0 right-0 flex h-6 gap-[2px] whitespace-nowrap text-[17px] leading-6 text-[#444]">
        <span className="bg-[#f5f5f5]/70 px-[10px]">Dane do Mapy ©2019 Google</span>
        <a href="#terms" className="bg-[#f5f5f5]/70 px-[11px]">
          Warunki korzystania z programu
        </a>
      </div>
    </div>
  );
}

/* ---------- Phone navigation ---------- */

function PhoneNav() {
  return (
    <nav className="flex h-[84px] items-center justify-between border-t-2 border-[#dcdcdc] bg-white px-[147px] text-[#8f8f8f]">
      <button type="button" aria-label="Recent apps">
        <svg className="block h-7 w-[26px]" viewBox="0 0 26 28" stroke="currentColor" strokeWidth="3">
          <path d="M1.500 1v26M12.500 1v26M23.500 1v26" />
        </svg>
      </button>
      <button type="button" aria-label="Home" className="h-7 w-7 rounded-[9px] border-[3px] border-[#8f8f8f]" />
      <button type="button" aria-label="Back">
        <svg className="block h-7 w-[26px]" viewBox="0 0 26 28" fill="none" stroke="currentColor" strokeWidth="3">
          <path d="M21.500 1.500 8.500 14l13 12.500" />
        </svg>
      </button>
    </nav>
  );
}

/* ---------- Dialogs ---------- */

function Action({ children, green = false }: { children: string; green?: boolean }) {
  return (
    <button
      type="button"
      className={`h-[63px] min-w-[112px] rounded-[7px] px-4 text-[24px] font-medium tracking-widest shadow-[0_5px_2px_-4px_rgba(0,0,0,0.2),0_4px_4px_0_rgba(0,0,0,0.14),0_2px_9px_0_rgba(0,0,0,0.12)] ${
        green ? "bg-[#8bc34a] text-white" : "bg-[#f5f5f5] text-[#212121]"
      }`}
    >
      {children}
    </button>
  );
}

function Toggle({ on = false }: { on?: boolean }) {
  return (
    <label className="relative mt-4 flex h-[35px] w-[70px] shrink-0 items-center">
      <input type="checkbox" role="switch" defaultChecked={on} aria-label="Information or Rating" className="absolute inset-0 z-10 opacity-0" />
      <span className={`mx-1 h-[25px] flex-1 rounded-full ${on ? "bg-[#607d8b]/60" : "bg-[#ebebeb]"}`} />
      {on ? (
        <span className="absolute -right-[18px] -top-[18px] flex h-[71px] w-[71px] items-center justify-center rounded-full bg-[#607d8b]/20">
          <span className="h-[35px] w-[35px] rounded-full bg-[#607d8b] shadow-[0_4px_7px_-2px_rgba(0,0,0,0.2),0_7px_9px_0_rgba(0,0,0,0.14)]" />
        </span>
      ) : (
        <span className="absolute left-0 top-0 h-[35px] w-[35px] rounded-full bg-[#fafafa] shadow-[0_4px_7px_-2px_rgba(0,0,0,0.2),0_7px_9px_0_rgba(0,0,0,0.14),0_2px_18px_0_rgba(0,0,0,0.12)]" />
      )}
    </label>
  );
}

function Dialog({ on = false, subtitle, children, actions }: { on?: boolean; subtitle: string; children: React.ReactNode; actions: React.ReactNode }) {
  return (
    <div className="absolute inset-0 z-30 flex items-center justify-center bg-[#212121]/46 px-[71px]">
      <section
        role="dialog"
        aria-label="Information or Rating?"
        className="w-full rounded-[7px] bg-white shadow-[0_19px_26px_-12px_rgba(0,0,0,0.2),0_42px_66px_5px_rgba(0,0,0,0.14),0_16px_80px_14px_rgba(0,0,0,0.12)]"
      >
        <div className="px-[42px] pt-[50px]">
          <div className="flex items-start justify-between pr-[10px]">
            <h2 className="pt-[11px] text-[36px] font-medium leading-[56px] text-[#212121]">Information or Rating?</h2>
            <Toggle on={on} />
          </div>
          <p className="mt-[52px] text-[25px] leading-[38px] text-[#777]">{subtitle}</p>
          {children}
        </div>
        <div className="flex justify-end gap-[14px] pb-[14px] pr-[14px]">{actions}</div>
      </section>
    </div>
  );
}

function Field({ id, label, value, suffix }: { id: string; label: string; value: string; suffix?: string }) {
  return (
    <div className="border-b border-[#8c8c8c] pb-[11px]">
      <label htmlFor={id} className="block text-[21px] leading-[38px] text-[#777]">
        {label}
      </label>
      <div className="flex h-9 items-center text-[28px] leading-9">
        <input id={id} defaultValue={value} className="min-w-0 flex-1 bg-transparent text-[#212121] outline-none" />
        {suffix && <span className="text-[#777]">{suffix}</span>}
      </div>
    </div>
  );
}

function InfoDialog() {
  return (
    <Dialog subtitle="Chosen meal info here!" actions={<Action>CLOSE</Action>}>
      <div className="flex flex-col gap-9">
        <Field id="meal-name" label="Name" value="Pizza Pepperoni" />
        <Field id="meal-price" label="Price" value="25" suffix="Zł" />
        <Field id="meal-rating" label="Average Rating" value="0" />
      </div>
      <p className="mb-[85px] mt-[73px] pl-7 text-[25px] leading-[38px] text-[#777]">Comments</p>
    </Dialog>
  );
}

function RateDialog() {
  return (
    <Dialog
      on
      subtitle="Rate This Meal!"
      actions={
        <>
          <Action>RATE</Action>
          <Action>CLOSE</Action>
        </>
      }
    >
      <div className="flex">
        {[1, 2, 3, 4, 5].map((n) => (
          <button key={n} type="button" aria-label={`Rate ${n}`} className="flex h-[68px] w-[70px] items-center justify-center">
            <MdStarBorder className="h-[42px] w-[42px] text-[#607d8b]" />
          </button>
        ))}
      </div>
      <input
        aria-label="Comment"
        placeholder="Insert comment text here"
        className="mb-[85px] mt-[39px] h-12 w-full border-b border-[#8c8c8c] bg-transparent pb-[11px] text-[28px] leading-9 outline-none placeholder:text-[#9e9e9e]"
      />
    </Dialog>
  );
}

function LoginCard() {
  return (
    <form className="mx-[98px] mt-[161px] overflow-visible rounded-[7px] bg-white shadow-[0_12px_14px_-7px_rgba(0,0,0,0.2),0_21px_30px_4px_rgba(0,0,0,0.14),0_9px_38px_7px_rgba(0,0,0,0.12)]">
      <h2 className="rounded-t-[7px] bg-[#8bc34a] px-7 text-[35px] leading-[98px] text-[#131d08]">Provide Email and Password</h2>
      <div className="flex flex-col gap-[74px] px-7 pt-[94px]">
        <input
          type="email"
          aria-label="Email"
          placeholder="Email"
          className="h-12 w-full border-b border-[#8c8c8c] bg-transparent pb-[11px] text-[28px] leading-9 outline-none placeholder:text-[#777]"
        />
        <input
          type="password"
          aria-label="Password"
          placeholder="Password"
          className="h-12 w-full border-b border-[#8c8c8c] bg-transparent pb-[11px] text-[28px] leading-9 outline-none placeholder:text-[#777]"
        />
      </div>
      <div className="flex justify-end pb-[14px] pr-[14px] pt-[79px]">
        <Action green>LOGIN</Action>
      </div>
    </form>
  );
}

/* ---------- Page ---------- */

function Phone({ time, children }: { time: string; children: React.ReactNode }) {
  return (
    <section className="flex min-h-[1480px] min-w-0 flex-col overflow-hidden">
      <StatusBar time={time} />
      <BrowserBar />
      <div className="relative flex-1 overflow-hidden bg-[#fafafa]">{children}</div>
      <PhoneNav />
    </section>
  );
}

export default function App() {
  return (
    <main className="grid grid-cols-2 bg-white font-[Roboto,sans-serif]">
      <Phone time="17:03">
        <AppBar />
        <SearchCard id="meal-search" active />
        <MapView viewBox="21 357 678 986" marker />
      </Phone>
      <Phone time="17:04">
        <AppBar />
        <LoginCard />
      </Phone>
      <Phone time="17:04">
        <AppBar />
        <SearchCard id="meal-search-info" />
        <MapView viewBox="21 357 678 986" />
        <InfoDialog />
      </Phone>
      <Phone time="17:04">
        <AppBar signOut />
        <SearchCard id="meal-search-rate" />
        <MapView viewBox="-28 297 678 986" />
        <RateDialog />
      </Phone>
    </main>
  );
}
